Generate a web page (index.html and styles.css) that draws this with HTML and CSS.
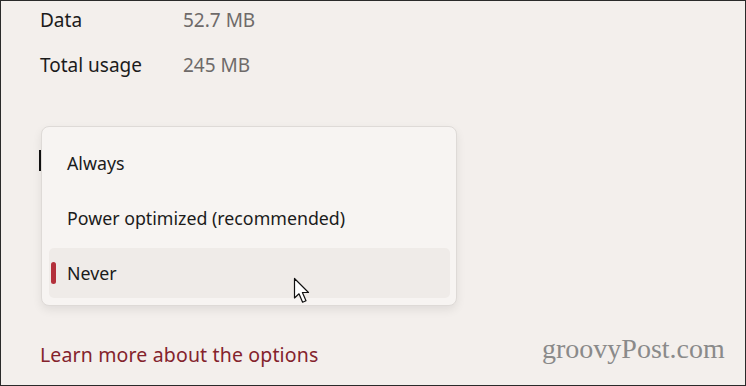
FILE: index.html
```html
<!DOCTYPE html>
<html>
<head>
<meta charset="utf-8">
<link rel="stylesheet" href="styles.css">
</head>
<body>
<div class="frame">
  <div class="stats">
    <div class="row"><span class="label">Data</span><span class="value">52.7 MB</span></div>
    <div class="row"><span class="label">Total usage</span><span class="value">245 MB</span></div>
  </div>
  <div class="menu-wrap">
    <span class="caret"></span>
    <div class="menu">
      <div class="item">Always</div>
      <div class="item">Power optimized (recommended)</div>
      <div class="item hover"><span class="indicator"></span>Never</div>
    </div>
    <svg class="cursor" width="20" height="30" viewBox="0 0 20 30">
      <path d="M1.5 1.5 L1.5 21 L6 16.8 L9.6 25.2 L13 23.7 L9.4 15.5 L15.5 15.5 Z" fill="#fff" stroke="#111" stroke-width="1.2" stroke-linejoin="round"/>
    </svg>
  </div>
  <a class="link">Learn more about the options</a>
  <div class="watermark">groovyPost.com</div>
</div>
</body>
</html>
```
FILE: styles.css
```css
* { box-sizing: border-box; }
html, body { margin: 0; padding: 0; }
body { width: 746px; height: 386px; overflow: hidden; }
.frame {
  position: relative;
  width: 746px;
  height: 386px;
  border: 1px solid #2a2a2a;
  background: #f3efec;
  padding-left: 39px;
  display: flex;
  flex-direction: column;
  font-family: "Noto Sans", "Open Sans", sans-serif;
  font-size: 17.8px;
  color: #1b1b1b;
}
.stats { display: flex; flex-direction: column; gap: 5px; margin-top: -1px; font-size: 19px; }
.row { height: 40px; display: flex; align-items: center; }
.label { width: 143px; }
.value { color: #6e6a69; }
.menu-wrap { position: relative; margin-top: 41px; width: 417px; }
.caret {
  position: absolute; left: -1px; top: 24px;
  width: 2px; height: 21px; background: #111;
}
.menu {
  margin-left: 1px;
  height: 180px;
  background: #f7f4f2;
  border: 1px solid #dedad7;
  border-radius: 8px;
  box-shadow: 0 4px 10px rgba(0,0,0,0.08);
  padding: 11px 6px 7px 7px;
  display: flex; flex-direction: column; gap: 5px;
}
.item {
  position: relative;
  height: 50px; display: flex; align-items: center;
  padding-left: 18px;
  border-radius: 5px;
}
.item.hover { background: #efebe8; }
.indicator {
  position: absolute; left: 2px; top: 14px;
  width: 5px; height: 22px; border-radius: 2.5px;
  background: #b3303b;
}
.cursor { position: absolute; left: 253px; top: 151px; }
.link {
  margin-top: 37px;
  color: #84232c;
  line-height: 24px;
  font-size: 19.5px;
  letter-spacing: 0.15px;
}
.watermark {
  position: absolute; left: 541px; top: 332px;
  font-family: "Liberation Serif", serif;
  font-size: 28px;
  color: #8a8a8a;
}
```
